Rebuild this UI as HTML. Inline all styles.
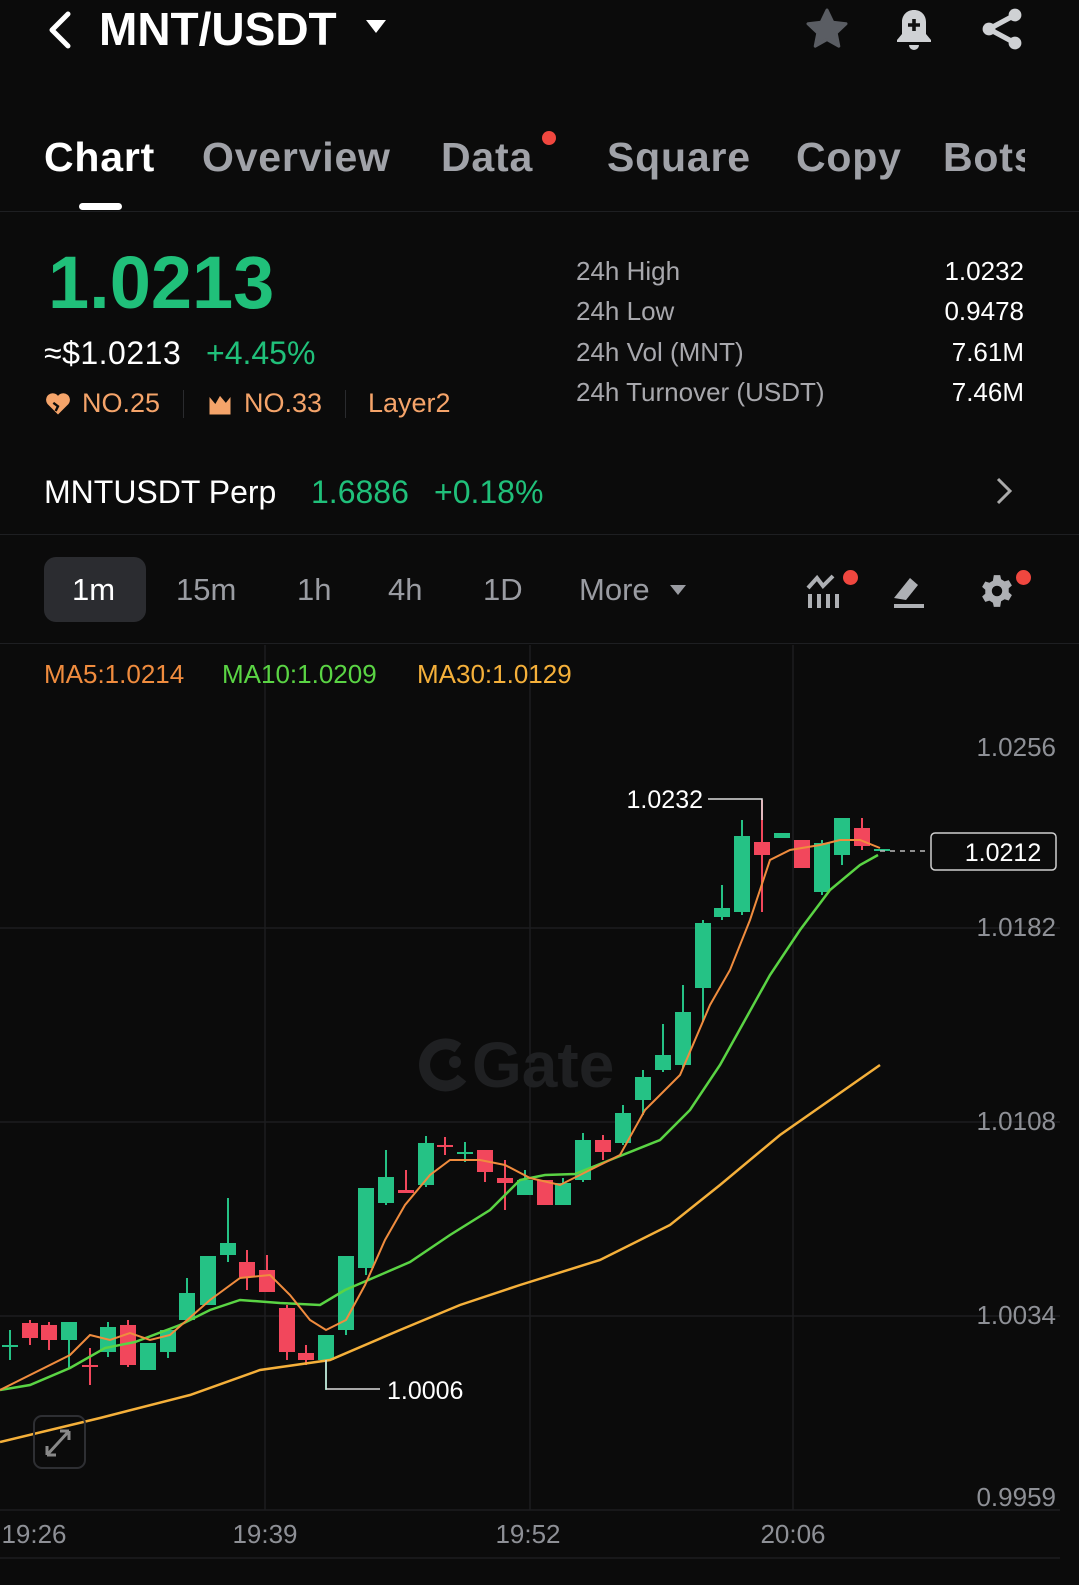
<!DOCTYPE html>
<html><head><meta charset="utf-8"><style>
*{margin:0;padding:0;box-sizing:border-box}
body{width:1079px;height:1585px;background:#0b0b0b;font-family:"Liberation Sans",sans-serif;color:#fff;position:relative;overflow:hidden}
.a{position:absolute;white-space:nowrap}
.tab{font-size:41px;font-weight:bold;color:#a0a2a8;top:134px;letter-spacing:0.8px}
.g{color:#20c07a}
.lbl{color:#a8a8ad;font-size:26px}
.val{color:#fff;font-size:26px;right:55px}
.tf{font-size:31px;color:#9a9ca2;top:572px}
</style></head><body>
<svg class="a" style="left:44px;top:10px" width="30" height="40" viewBox="0 0 30 40"><path d="M24 4 L8 20 L24 36" stroke="#fff" stroke-width="5" fill="none" stroke-linecap="round" stroke-linejoin="round"/></svg>
<div class="a" style="left:99px;top:2px;font-size:46px;font-weight:bold">MNT/USDT</div>
<svg class="a" style="left:366px;top:20px" width="20" height="14"><path d="M0 0H20L10 13Z" fill="#fff"/></svg>
<svg class="a" style="left:803px;top:5px" width="48" height="48" viewBox="0 0 24 24"><path d="M12 2.5l2.9 6.1 6.6.8-4.9 4.6 1.3 6.6L12 17.3l-5.9 3.3 1.3-6.6L2.5 9.4l6.6-.8z" fill="#5a5d63" stroke="#5a5d63" stroke-linejoin="round" stroke-width="1.5"/></svg>
<svg class="a" style="left:890px;top:5px" width="48" height="48" viewBox="0 0 24 24"><path d="M12 2.5c-3.6 0-6 2.6-6 6v6L3.5 17.5v1h17v-1L18 14.5v-6c0-3.4-2.4-6-6-6z" fill="#cfd1d4"/><path d="M9.5 20a2.5 2.5 0 0 0 5 0z" fill="#cfd1d4"/><path d="M12 7v6M9 10h6" stroke="#111" stroke-width="1.8"/></svg>
<svg class="a" style="left:978px;top:5px" width="48" height="48" viewBox="0 0 24 24"><circle cx="18.5" cy="5" r="3.2" fill="#cfd1d4"/><circle cx="5.5" cy="12" r="3.2" fill="#cfd1d4"/><circle cx="18.5" cy="19" r="3.2" fill="#cfd1d4"/><path d="M18.5 5L5.5 12L18.5 19" stroke="#cfd1d4" stroke-width="2.6" fill="none"/></svg>
<div class="a tab" style="left:44px;color:#fff">Chart</div>
<div class="a tab" style="left:202px">Overview</div>
<div class="a tab" style="left:441px">Data</div>
<div class="a" style="left:542px;top:131px;width:14px;height:14px;border-radius:50%;background:#f0473f"></div>
<div class="a tab" style="left:607px">Square</div>
<div class="a tab" style="left:796px">Copy</div>
<div class="a tab" style="left:943px;width:82px;overflow:hidden">Bots</div>
<div class="a" style="left:79px;top:203px;width:43px;height:7px;border-radius:4px;background:#fff"></div>
<div class="a" style="left:0;top:211px;width:1079px;height:1px;background:#1e1f22"></div>
<div class="a g" style="left:48px;top:240px;font-size:74px;font-weight:bold">1.0213</div>
<div class="a" style="left:44px;top:335px;font-size:32px;letter-spacing:0.5px">≈$1.0213</div>
<div class="a g" style="left:206px;top:335px;font-size:32px">+4.45%</div>
<svg class="a" style="left:44px;top:390px" width="28" height="28" viewBox="0 0 24 24"><path d="M12 21L3 12A5 5 0 0 1 12 5A5 5 0 0 1 21 12Z" fill="#f5a46a"/><path d="M8 11l4 3-2 4" stroke="#0b0b0b" stroke-width="2" fill="none"/></svg>
<div class="a" style="left:82px;top:388px;font-size:27px;color:#f5a46a">NO.25</div>
<div class="a" style="left:183px;top:390px;width:1px;height:28px;background:#2a2b2e"></div>
<svg class="a" style="left:206px;top:390px" width="28" height="28" viewBox="0 0 24 24"><path d="M3 21V6l5 6 4-7 5 6 4-5v15z" fill="#f5a46a"/></svg>
<div class="a" style="left:244px;top:388px;font-size:27px;color:#f5a46a">NO.33</div>
<div class="a" style="left:345px;top:390px;width:1px;height:28px;background:#2a2b2e"></div>
<div class="a" style="left:368px;top:388px;font-size:27px;color:#f5a46a">Layer2</div>
<div class="a lbl" style="left:576px;top:256px">24h High</div>
<div class="a lbl" style="left:576px;top:296px">24h Low</div>
<div class="a lbl" style="left:576px;top:337px">24h Vol (MNT)</div>
<div class="a lbl" style="left:576px;top:377px">24h Turnover (USDT)</div>
<div class="a val" style="top:256px">1.0232</div>
<div class="a val" style="top:296px">0.9478</div>
<div class="a val" style="top:337px">7.61M</div>
<div class="a val" style="top:377px">7.46M</div>
<div class="a" style="left:44px;top:474px;font-size:32px">MNTUSDT Perp</div>
<div class="a g" style="left:311px;top:474px;font-size:32px">1.6886</div>
<div class="a g" style="left:434px;top:474px;font-size:32px">+0.18%</div>
<svg class="a" style="left:994px;top:476px" width="20" height="30"><path d="M4 3L16 15L4 27" stroke="#aaa" stroke-width="3" fill="none"/></svg>
<div class="a" style="left:0;top:534px;width:1079px;height:1px;background:#1e1f22"></div>
<div class="a" style="left:44px;top:557px;width:102px;height:65px;border-radius:12px;background:#2b2c30"></div>
<div class="a tf" style="left:72px;color:#fff">1m</div>
<div class="a tf" style="left:176px">15m</div>
<div class="a tf" style="left:297px">1h</div>
<div class="a tf" style="left:388px">4h</div>
<div class="a tf" style="left:483px">1D</div>
<div class="a tf" style="left:579px">More</div>
<svg class="a" style="left:670px;top:585px" width="16" height="11"><path d="M0 0H16L8 10Z" fill="#9a9ca2"/></svg>
<svg class="a" style="left:805px;top:572px" width="40" height="38" viewBox="0 0 40 38"><path d="M3 16L12 6L18 14L28 4" stroke="#aeb0b4" stroke-width="4" fill="none"/><path d="M5 22v14M14 22v14M23 22v14M32 22v14" stroke="#aeb0b4" stroke-width="4"/></svg>
<div class="a" style="left:843px;top:570px;width:15px;height:15px;border-radius:50%;background:#f0473f"></div>
<svg class="a" style="left:890px;top:572px" width="40" height="38" viewBox="0 0 40 38"><path d="M4 26L20 6L28 13L16 28Z" fill="#aeb0b4"/><path d="M4 34H34" stroke="#aeb0b4" stroke-width="4"/></svg>
<svg class="a" style="left:978px;top:572px" width="38" height="38" viewBox="0 0 24 24"><path d="M10 2h4l.6 2.6 2.2 1.3 2.6-.8 2 3.4-2 1.8v2.5l2 1.8-2 3.4-2.6-.8-2.2 1.3L14 22h-4l-.6-2.6-2.2-1.3-2.6.8-2-3.4 2-1.8V11.2l-2-1.8 2-3.4 2.6.8 2.2-1.3z" fill="#aeb0b4"/><circle cx="12" cy="12" r="3.3" fill="#0b0b0b"/></svg>
<div class="a" style="left:1016px;top:570px;width:15px;height:15px;border-radius:50%;background:#f0473f"></div>
<div class="a" style="left:0;top:643px;width:1079px;height:1px;background:#1e1f22"></div>
<svg class="a" style="left:0;top:0" width="1079" height="1585" viewBox="0 0 1079 1585">
<g stroke="#1c1d20" stroke-width="1.5">
<path d="M0 928H1060M0 1122H1060M0 1316H1060M0 1510H1060M265 645V1510M530 645V1510M793 645V1510"/>
</g>
<path d="M458 1048A21 21 0 1 0 462 1078" stroke="#1f2022" stroke-width="11" fill="none"/>
<circle cx="455" cy="1062" r="6" fill="#1f2022"/>
<text x="472" y="1087" font-family="Liberation Sans" font-weight="bold" font-size="64" fill="#1f2022">Gate</text>
<g font-family="Liberation Sans" font-size="26" fill="#8e9096" text-anchor="end">
<text x="1056" y="756">1.0256</text><text x="1056" y="936">1.0182</text><text x="1056" y="1130">1.0108</text><text x="1056" y="1324">1.0034</text><text x="1056" y="1506">0.9959</text>
</g>
<g font-family="Liberation Sans" font-size="26" fill="#8e9096" text-anchor="middle">
<text x="34" y="1543">19:26</text><text x="265" y="1543">19:39</text><text x="528" y="1543">19:52</text><text x="793" y="1543">20:06</text>
</g>
<path d="M0 1558H1060" stroke="#1c1d20" stroke-width="1.5"/>
<g font-family="Liberation Sans" font-size="26">
<text x="44" y="683" fill="#f08c3e">MA5:1.0214</text>
<text x="222" y="683" fill="#5ad444">MA10:1.0209</text>
<text x="417" y="683" fill="#f5b03a">MA30:1.0129</text>
</g>
<g id="c"></g>
<g stroke-width="2" fill="none">
<path d="M0 1442L100 1418L190 1395L260 1370L330 1360L400 1330L460 1305L520 1285L600 1260L670 1225L720 1185L780 1135L830 1100L880 1065" stroke="#f5b03a" stroke-width="2.5"/>
<path d="M0 1390L30 1385L70 1368L105 1348L135 1342L180 1325L210 1310L240 1300L280 1303L320 1305L345 1290L380 1275L410 1262L450 1235L490 1210L520 1180L545 1175L575 1174L610 1160L660 1140L690 1110L720 1065L745 1020L770 975L800 930L830 890L860 865L878 855" stroke="#5ad444" stroke-width="2.5"/>
<path d="M0 1390L70 1355L90 1335L110 1340L130 1333L150 1340L170 1335L210 1300L240 1278L270 1275L290 1295L310 1320L326 1330L346 1320L365 1285L385 1240L405 1205L430 1175L450 1160L480 1160L505 1165L530 1178L560 1185L600 1165L620 1155L645 1110L680 1075L710 1005L730 970L750 920L770 860L790 850L820 845L840 840L860 840L880 848" stroke="#f08c3e" stroke-width="2"/>
</g>
<path d="M708 799H762V820" stroke="#ddd" stroke-width="1.5" fill="none"/>
<text x="703" y="808" font-family="Liberation Sans" font-size="25" fill="#fff" text-anchor="end">1.0232</text>
<path d="M326 1360V1389H380" stroke="#ddd" stroke-width="1.5" fill="none"/>
<text x="387" y="1399" font-family="Liberation Sans" font-size="25" fill="#fff">1.0006</text>
<path d="M880 851H930" stroke="#bbb" stroke-width="1.5" stroke-dasharray="5 5"/>
<rect x="931" y="833" width="125" height="37" rx="4" fill="#0b0b0b" stroke="#cfcfcf" stroke-width="1.5"/>
<text x="1003" y="861" font-family="Liberation Sans" font-size="25" fill="#fff" text-anchor="middle">1.0212</text>
<rect x="34" y="1416" width="51" height="52" rx="8" fill="none" stroke="#2e2f33" stroke-width="2"/>
<path d="M47 1455l22-24M47 1455v-9M47 1455h9M69 1431h-9M69 1431v9" stroke="#888" stroke-width="3" fill="none"/>
</svg>
<script>
var d=[[10,1345,1347,1330,1360,1],[30,1323,1338,1320,1345,0],[49,1325,1340,1322,1350,0],[69,1322,1340,1322,1368,1],[90,1365,1367,1348,1385,0],[108,1327,1352,1322,1357,1],[128,1325,1365,1320,1367,0],[148,1343,1370,1343,1370,1],[168,1330,1352,1330,1358,1],[187,1293,1320,1278,1322,1],[208,1256,1305,1256,1305,1],[228,1243,1255,1198,1262,1],[247,1262,1277,1250,1290,0],[267,1270,1292,1255,1292,0],[287,1308,1352,1305,1360,0],[306,1353,1360,1345,1365,0],[326,1335,1360,1335,1390,1],[346,1256,1330,1256,1335,1],[366,1188,1268,1188,1275,1],[386,1177,1203,1150,1205,1],[406,1190,1193,1170,1193,0],[426,1143,1185,1136,1187,1],[445,1145,1147,1137,1155,0],[465,1152,1154,1142,1162,1],[485,1150,1172,1150,1182,0],[505,1178,1183,1160,1210,0],[525,1180,1195,1170,1195,1],[545,1180,1205,1180,1205,0],[563,1183,1205,1178,1205,1],[583,1140,1180,1133,1182,1],[603,1140,1152,1135,1160,0],[623,1113,1143,1105,1145,1],[643,1077,1100,1070,1115,1],[663,1055,1070,1024,1072,1],[683,1012,1065,985,1068,1],[703,923,988,920,1022,1],[722,908,917,885,920,1],[742,836,912,820,915,1],[762,842,855,800,912,0],[782,833,838,833,838,1],[802,840,868,840,868,0],[822,843,892,840,895,1],[842,818,855,818,865,1],[862,828,846,818,850,0],[882,849,851,849,851,1]];
var s='';d.forEach(function(c){var col=c[5]?'#25c285':'#f2475c';s+='<line x1="'+c[0]+'" x2="'+c[0]+'" y1="'+c[3]+'" y2="'+c[4]+'" stroke="'+col+'" stroke-width="2"/><rect x="'+(c[0]-8)+'" y="'+c[1]+'" width="16" height="'+Math.max(2,c[2]-c[1])+'" fill="'+col+'"/>';});
document.getElementById('c').innerHTML=s;
</script>
</body></html>
